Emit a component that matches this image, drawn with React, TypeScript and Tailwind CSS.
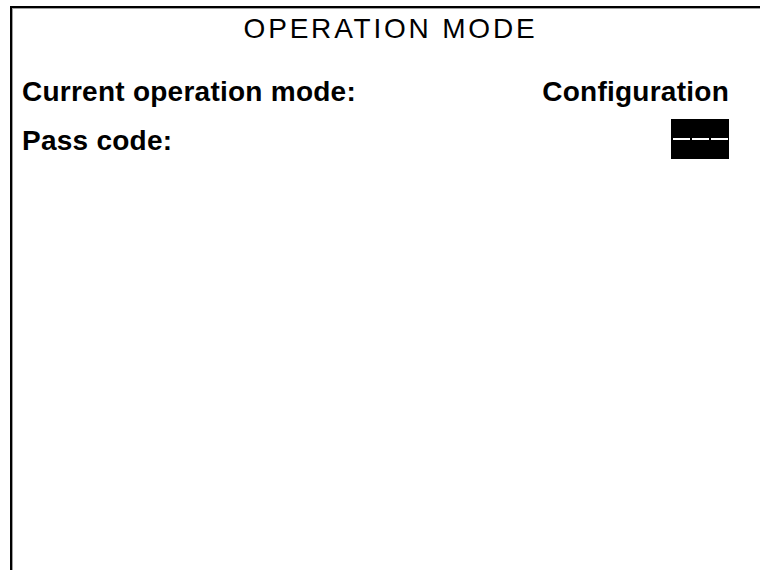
import React from "react";

const rows = [
  { label: "Current operation mode:", value: "Configuration" },
  { label: "Pass code:", value: null },
];

export default function App() {
  return (
    <div className="w-[760px] h-[570px] overflow-hidden bg-white pl-[10px] pt-[6px]">
      <div className="w-[750px] h-[564px] border-l-2 border-t-2 border-black">
        <div
          className="h-full border-l border-t border-[#a0a0a0] text-black"
          style={{ fontFamily: '"Liberation Sans", Arial, sans-serif' }}
        >
          <h1 className="text-center text-[28px] leading-[32px] pt-[4px] pl-[8px] tracking-[2.8px]">
            OPERATION MODE
          </h1>
          <div className="mt-[20px] w-[716px] pl-[9px]">
            {rows.map((row) => (
              <div
                key={row.label}
                className="flex items-center justify-between h-[49px] text-[28px] font-bold tracking-[0.25px]"
              >
                <span className="pt-[4px]">{row.label}</span>
                {row.value ? (
                  <span className="pt-[4px]">{row.value}</span>
                ) : (
                  <span className="flex items-center justify-center gap-[2px] w-[58px] h-[40px] bg-black">
                    <span className="w-[17px] h-[2px] bg-white" />
                    <span className="w-[17px] h-[2px] bg-white" />
                    <span className="w-[17px] h-[2px] bg-white" />
                  </span>
                )}
              </div>
            ))}
          </div>
        </div>
      </div>
    </div>
  );
}
